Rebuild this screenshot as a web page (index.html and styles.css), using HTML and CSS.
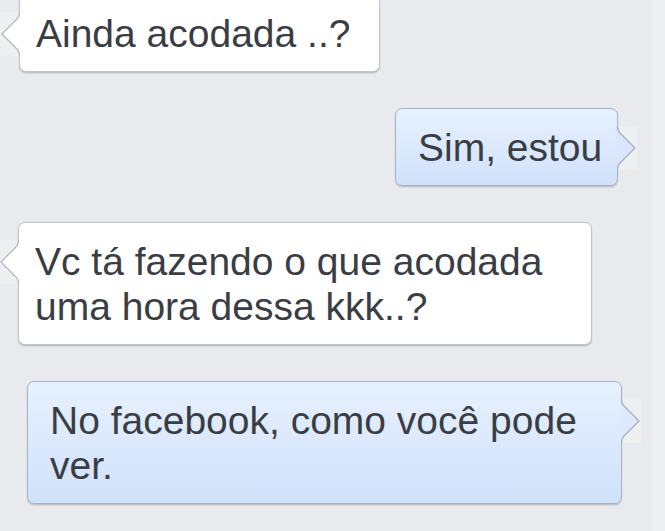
FILE: index.html
```html
<!DOCTYPE html>
<html lang="pt">
<head>
<meta charset="utf-8">
<link rel="stylesheet" href="styles.css">
</head>
<body>
<div class="chat">
  <div class="bubble in b1">
    <svg class="tail tail-left" width="21" height="44" viewBox="0 0 21 44"><rect x="0" y="0" width="19" height="44" fill="#eeeff1"/><path d="M19.5 0 Q19.5 5 16 8 L2 22 L16 36 Q19.5 39 19.5 44 L21 44 L21 0 Z" fill="#ffffff"/><path d="M19.5 0 Q19.5 5 16 8 L2 22 L16 36 Q19.5 39 19.5 44" fill="none" stroke="#b4b8bf" stroke-width="1.3"/></svg>
    Ainda acodada ..?
  </div>
  <div class="bubble out b2">
    <svg class="tail tail-right" width="21" height="44" viewBox="0 0 21 44"><rect x="2" y="0" width="19" height="44" fill="#eeeff1"/><path d="M1.5 0 Q1.5 5 5 8 L19 22 L5 36 Q1.5 39 1.5 44 L0 44 L0 0 Z" fill="#d9e6fb"/><path d="M1.5 0 Q1.5 5 5 8 L19 22 L5 36 Q1.5 39 1.5 44" fill="none" stroke="#9eafc6" stroke-width="1.3"/></svg>
    Sim, estou
  </div>
  <div class="bubble in b3">
    <svg class="tail tail-left" width="21" height="44" viewBox="0 0 21 44"><rect x="0" y="0" width="19" height="44" fill="#eeeff1"/><path d="M19.5 0 Q19.5 5 16 8 L2 22 L16 36 Q19.5 39 19.5 44 L21 44 L21 0 Z" fill="#ffffff"/><path d="M19.5 0 Q19.5 5 16 8 L2 22 L16 36 Q19.5 39 19.5 44" fill="none" stroke="#b4b8bf" stroke-width="1.3"/></svg>
    Vc tá fazendo o que acodada uma hora dessa kkk..?
  </div>
  <div class="bubble out b4">
    <svg class="tail tail-right" width="21" height="44" viewBox="0 0 21 44"><rect x="2" y="0" width="19" height="44" fill="#eeeff1"/><path d="M1.5 0 Q1.5 5 5 8 L19 22 L5 36 Q1.5 39 1.5 44 L0 44 L0 0 Z" fill="#dde9fc"/><path d="M1.5 0 Q1.5 5 5 8 L19 22 L5 36 Q1.5 39 1.5 44" fill="none" stroke="#9eafc6" stroke-width="1.3"/></svg>
    No facebook, como você pode ver.
  </div>
</div>
</body>
</html>
```

FILE: styles.css
```css
html, body {
  margin: 0;
  padding: 0;
}

body {
  background: #eeeff1;
  width: 665px;
  height: 531px;
  overflow: hidden;
  font-family: "Liberation Sans", Arial, sans-serif;
}

.chat {
  width: 653px;
  height: 531px;
  background: #e9eaed;
  display: flex;
  flex-direction: column;
  gap: 36px;
  box-sizing: border-box;
}

.bubble {
  position: relative;
  box-sizing: border-box;
  font-size: 39px;
  line-height: 45px;
  color: #3b3d45;
  border-radius: 7px;
  padding: 16px 15px 15px 16px;
  box-shadow: 0 1px 1px rgba(0, 0, 0, 0.14), 0 2px 2px rgba(0, 0, 0, 0.06);
}

.in {
  align-self: flex-start;
  margin-left: 19px;
  background: #ffffff;
  border: 1px solid #bfc2c8;
}

.out {
  align-self: flex-end;
  margin-right: 33px;
  padding-left: 22px;
  background: linear-gradient(to bottom, #e7f1fe 0%, #d0e1fa 100%);
  border: 1px solid #a3b3ca;
}

.b1 {
  width: 361px;
  margin-top: -6px;
  white-space: nowrap;
}

.b2 {
  width: 223px;
  margin-right: 35px;
  padding-right: 0;
  white-space: nowrap;
}

.b3 {
  width: 574px;
  margin-left: 18px;
}

.b4 {
  width: 595px;
  margin-right: 31px;
}

.tail {
  position: absolute;
  top: 17px;
  display: block;
}

.tail-left {
  left: -20px;
}

.tail-right {
  right: -20px;
}
```
